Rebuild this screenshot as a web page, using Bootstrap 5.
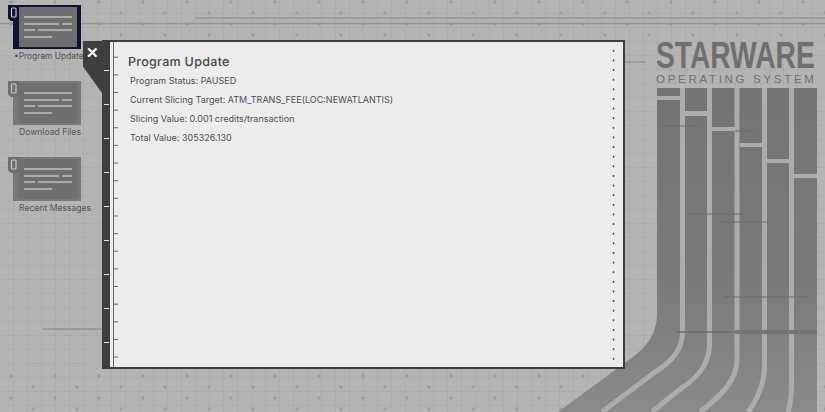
<!DOCTYPE html>
<html lang="en">
<head>
  <meta charset="UTF-8">
  <meta name="viewport" content="width=device-width, initial-scale=1.0">
  <title>Starware Operating System</title>
  <link href="https://cdn.jsdelivr.net/npm/bootstrap@5.3.0/dist/css/bootstrap.min.css" rel="stylesheet">
  <script src="https://cdn.jsdelivr.net/npm/bootstrap@5.3.0/dist/js/bootstrap.bundle.min.js"></script>
  <style>
    html, body {
      height: 100%;
      margin: 0;
      overflow: hidden;
      background: #b4b4b4;
    }
    .desktop {
      position: relative;
      width: 825px;
      height: 412px;
      overflow: hidden;
      font-family: Inter, "Liberation Sans", sans-serif;
    }
    .backdrop {
      position: absolute;
      inset: 0;
      filter: blur(.5px);
    }
    /* logo */
    .brand {
      position: absolute;
      left: 655px;
      top: 38px;
      fill: #6f6f6f;
      font-family: "Liberation Sans", sans-serif;
    }
    .brand-name {
      font-size: 28.2px;
      font-weight: 700;
    }
    .brand-sub {
      font-size: 11.5px;
      letter-spacing: 2.7px;
    }
    /* desktop icons */
    .icon-rail {
      position: absolute;
      left: 8px;
      top: 5px;
      width: 90px;
      gap: 19px;
    }
    .file-icon {
      width: 90px;
      color: #565656;
      --frame: #787878;
      --tab: #6e6e6e;
    }
    .file-icon.active {
      --frame: #0d1631;
      --tab: #0d1631;
    }
    .file-icon svg {
      display: block;
    }
    .file-icon span {
      display: block;
      margin: 2px 0 0 11px;
      font-size: 8.6px;
      line-height: 11px;
      white-space: nowrap;
    }
    .file-icon.active span {
      margin-left: 6px;
      font-size: 8.4px;
    }
    /* window */
    .os-window {
      position: absolute;
      left: 102px;
      top: 40px;
      width: 523px;
      height: 329px;
      background: #ececec;
      border: solid #3e3e3e;
      border-width: 2px 2px 2px 0;
    }
    .win-side {
      width: 8px;
      background-color: #3e3e3e;
      background-image: linear-gradient(#3e3e3e 0 28px, #e6e6e6 28px 29px, #3e3e3e 29px 34px);
      background-size: 5px 34px;
      background-position: 2px 0;
      background-repeat: repeat-y;
    }
    .win-rule {
      width: 5px;
      margin-left: 3px;
      border-left: 1px solid #666;
      background-image: linear-gradient(transparent 0 15px, #666 15px 16px, transparent 16px);
      background-size: 4px 17.65px;
      background-position: 0 0;
      background-repeat: repeat-y;
    }
    .win-tab {
      position: absolute;
      left: -19px;
      top: -1px;
      width: 19px;
      height: 52px;
      background: #3e3e3e;
      clip-path: polygon(0 0, 100% 0, 100% 100%, 0 49%);
    }
    .win-close {
      position: absolute;
      left: -16px;
      top: 4px;
      width: 11px;
      height: 13px;
      color: #fff;
      font-size: 15px;
      font-weight: 700;
      line-height: 13px;
      text-align: center;
    }
    .win-body {
      flex: 1;
      padding: 13px 0 0 10px;
      color: #4a4f55;
    }
    .win-body h1 {
      margin: 0;
      font-family: Inter, sans-serif;
      font-size: 12.5px;
      font-weight: 500;
      line-height: 16px;
      letter-spacing: .3px;
      text-rendering: geometricPrecision;
      color: #42474d;
    }
    .win-body p {
      margin: 0 0 0 2px;
      font-size: 9px;
      line-height: 19px;
      white-space: nowrap;
    }
    .win-dots {
      width: 3px;
      margin: 0 8px 0 0;
      background-image: radial-gradient(circle, #444 .8px, transparent 1.2px);
      background-size: 3px 9.63px;
      background-position: 0 4px;
      background-repeat: repeat-y;
    }
  </style>
</head>
<body>

  <div class="desktop">

    <!-- wallpaper: grid, marks and the striped band -->
    <svg class="backdrop" width="825" height="412" viewBox="0 0 825 412">
      <defs>
        <pattern id="gridFine" width="14" height="14" patternUnits="userSpaceOnUse">
          <path d="M14 0V14M0 14H14" stroke="#a6a6a6" stroke-width="1" fill="none"/>
        </pattern>
        <pattern id="marks" width="44" height="22" patternUnits="userSpaceOnUse">
          <path d="M11 0l2 2-2 2-2-2zM33 11l2 2-2 2-2-2z" fill="#9d9d9d"/>
        </pattern>
        <linearGradient id="bandFill" x1="0" y1="0" x2="0" y2="1">
          <stop offset="0" stop-color="#747474"/>
          <stop offset=".6" stop-color="#7a7a7a"/>
          <stop offset="1" stop-color="#8a8a8a"/>
        </linearGradient>
      </defs>
      <rect width="825" height="412" fill="#b4b4b4"/>
      <rect width="825" height="412" fill="url(#gridFine)"/>
      <rect width="825" height="38" fill="url(#marks)"/>
      <rect y="366" width="825" height="46" fill="url(#marks)"/>

      <path d="M195 18H825M0 23.5H825M625 62H646M42 329H102" stroke="#939393" stroke-width="1.5" fill="none"/>

      <path d="M657 88H817V412H558L630 359C648 347 657 332 657 314Z" fill="url(#bandFill)"/>
      <g stroke="#acacac" stroke-width="5" fill="none">
        <path d="M682.5 88V332C682.5 350 672 362 655 372L602 412"/>
        <path d="M709.5 88V345C709.5 365 695 380 680 389L652 412"/>
        <path d="M737 88V360C737 380 722 395 700 412"/>
        <path d="M764.5 88V365C764.5 385 757 400 748 412"/>
        <path d="M791.5 88V385C791.5 395 790 405 788 412"/>
      </g>
      <g fill="#acacac">
        <rect x="657" y="96" width="23" height="4"/>
        <rect x="685" y="111" width="22" height="5"/>
        <rect x="712" y="127" width="23" height="4"/>
        <rect x="740" y="143" width="22" height="4"/>
        <rect x="767" y="159" width="22" height="4"/>
        <rect x="794" y="174" width="23" height="4"/>
      </g>
      <path d="M663 126H700M735 131H755M690 214H744M718 222H770M723 297H807" stroke="#6a6a6a" stroke-width="1" fill="none"/>
      <path d="M676 332H735" stroke="#6e6e6e" stroke-width="1.5" fill="none"/>
      <path d="M735 332H817" stroke="#74747c" stroke-width="4" fill="none"/>
    </svg>

    <svg class="brand" width="170" height="50" viewBox="0 0 170 50">
      <text class="brand-name" transform="scale(1 1.3)" x="1" y="23.1">STARWARE</text>
      <text class="brand-sub" x="1" y="45">OPERATING SYSTEM</text>
    </svg>

    <!-- desktop icons -->
    <svg width="0" height="0" class="d-block position-absolute">
      <symbol id="fileGlyph" viewBox="0 0 73 44">
        <path style="fill: var(--frame)" d="M0 0H73V44H5V16H3L0 13Z"/>
        <path style="fill: var(--tab)" d="M0 0H11V16H3L0 13Z"/>
        <rect x="11" y="2" width="58" height="40" fill="#6f6f6f"/>
        <rect x="3.5" y="3" width="4.5" height="9" rx="1" fill="none" stroke="#c9c9c9" stroke-width="1.2"/>
        <path d="M16 12H64M16 19H51M54 19H64M16 25H27M30 25H64M16 32H44" stroke="#e8e8e8" stroke-width="1"/>
      </symbol>
    </svg>
    <div class="icon-rail d-flex flex-column">
      <div class="file-icon active">
        <svg width="73" height="44"><use href="#fileGlyph"/></svg>
        <span>•Program Update</span>
      </div>
      <div class="file-icon">
        <svg width="73" height="44"><use href="#fileGlyph"/></svg>
        <span>Download Files</span>
      </div>
      <div class="file-icon">
        <svg width="73" height="44"><use href="#fileGlyph"/></svg>
        <span>Recent Messages</span>
      </div>
    </div>

    <!-- program window -->
    <div class="os-window d-flex">
      <div class="win-tab"></div>
      <div class="win-close">✕</div>
      <div class="win-side"></div>
      <div class="win-rule"></div>
      <div class="win-body">
        <h1>Program Update</h1>
        <p>Program Status: PAUSED</p>
        <p>Current Slicing Target: ATM_TRANS_FEE(LOC:NEWATLANTIS)</p>
        <p>Slicing Value: 0.001 credits/transaction</p>
        <p>Total Value: 305326.130</p>
      </div>
      <div class="win-dots"></div>
    </div>

  </div>

</body>
</html>
